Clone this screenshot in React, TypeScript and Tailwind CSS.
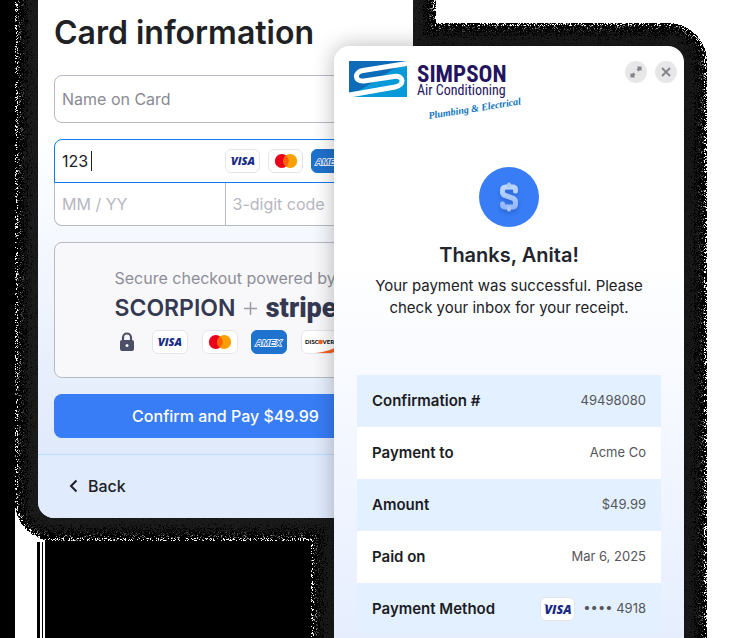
import { useMemo } from "react";
import type { ReactNode } from "react";

function boxDistance(x: number, y: number, l: number, t: number, r: number, b: number) {
  const radius = 16;
  const dx = Math.max(l + radius - x, x - (r - radius), 0);
  const dy = Math.max(t + radius - y, y - (b - radius), 0);
  return Math.hypot(dx, dy) - radius;
}

/* Grainy black halo that surrounds the two panels. */
function buildGrain() {
  const layers: Record<string, string[]> = {
    "#1b1b1b": [],
    "#111111": [],
    "#000000": [],
    "#444444": [],
    "#929292": [],
    "#ffffff": [],
  };
  let seed = 90210;
  const random = () => {
    seed = (seed * 1664525 + 1013904223) % 4294967296;
    return seed / 4294967296;
  };
  for (let y = 0; y < 638; y++) {
    let runColor = "";
    let runStart = 0;
    for (let x = 15; x <= 708; x++) {
      const d = Math.min(
        boxDistance(x + 0.5, y + 0.5, 38, -100, 413, 518),
        boxDistance(x + 0.5, y + 0.5, 334, 46, 684, 900),
      );
      let color = "";
      if (x < 708 && d > -2 && d < 23) {
        const n = random();
        if (d < 6) color = n < 0.15 ? "#111111" : "#1b1b1b";
        else if (d < 10) color = n < 0.25 ? "#111111" : n < 0.33 ? "#000000" : "#1b1b1b";
        else if (d < 14) color = n < 0.35 ? "#000000" : n < 0.6 ? "#111111" : "#1b1b1b";
        else if (d < 17) color = n < 0.65 ? "#000000" : n < 0.75 ? "#444444" : "#1b1b1b";
        else if (d < 20) color = n < 0.8 ? "#000000" : n < 0.93 ? "#444444" : "#929292";
        else color = n < 0.7 ? "#000000" : n < 0.77 ? "#929292" : "#ffffff";
      }
      if (color !== runColor) {
        if (runColor) {
          const w = x - runStart;
          layers[runColor].push(`M${runStart} ${y}h${w}v1h-${w}z`);
        }
        runColor = color;
        runStart = x;
      }
    }
  }
  return Object.entries(layers).map(([fill, parts]) => ({ fill, d: parts.join("") }));
}

function Backdrop() {
  const grain = useMemo(buildGrain, []);
  return (
    <svg
      aria-hidden="true"
      className="pointer-events-none absolute left-0 top-0"
      width="748"
      height="638"
      viewBox="0 0 748 638"
      shapeRendering="crispEdges"
    >
      <path d="M0 0h15v638H0zM37 542h3v96h-3zM42 542h1v96h-1zM45 540h270v98H45z" fill="#000" />
      {grain.map((layer) => (
        <path key={layer.fill} d={layer.d} fill={layer.fill} />
      ))}
    </svg>
  );
}

function Badge({ children, wide, blue }: { children: ReactNode; wide?: boolean; blue?: boolean }) {
  return (
    <span
      className={`flex h-6 shrink-0 items-center justify-center overflow-hidden rounded-md border ${
        wide ? "w-9" : "w-[35px]"
      } ${blue ? "border-[#1f72cd] bg-[#1f72cd]" : "border-[#e4e5ec] bg-white"}`}
    >
      {children}
    </span>
  );
}

function Visa({ large }: { large?: boolean }) {
  return (
    <svg width={large ? 32 : 28} height={large ? 18 : 16} viewBox="0 0 28 16" role="img" aria-label="Visa">
      <text
        x="14"
        y="12"
        textAnchor="middle"
        fill="#172b85"
        fontFamily="'Open Sans', 'Noto Sans', sans-serif"
        fontSize="11"
        fontWeight="800"
        fontStyle="italic"
      >
        VISA
      </text>
      <path d="M1 4h3l1 1.2z" fill="#172b85" />
    </svg>
  );
}

function Mastercard() {
  return (
    <svg width="24" height="16" viewBox="0 0 24 16" role="img" aria-label="Mastercard">
      <circle cx="7.8" cy="8" r="7" fill="#eb001b" />
      <circle cx="16.2" cy="8" r="7" fill="#f9a000" />
      <path d="M12 2.4a7 7 0 0 1 0 11.2a7 7 0 0 1 0-11.2z" fill="#ff5f00" />
    </svg>
  );
}

function Amex() {
  return (
    <svg width="32" height="16" viewBox="0 0 32 16" role="img" aria-label="Amex" className="shrink-0">
      <text
        x="15.5"
        y="11.5"
        textAnchor="middle"
        fill="#1f72cd"
        stroke="#fff"
        strokeWidth="1.5"
        paintOrder="stroke"
        fontFamily="'Liberation Sans', sans-serif"
        fontSize="9"
        fontWeight="700"
        fontStyle="italic"
      >
        AMEX
      </text>
    </svg>
  );
}

function Discover() {
  return (
    <svg width="34" height="22" viewBox="0 0 34 22" role="img" aria-label="Discover" className="shrink-0">
      <path d="M14 22Q28 20 34 16V22z" fill="#fd5f1e" />
      <text x="3" y="13" fill="#111" fontFamily="Lato, sans-serif" fontSize="6" fontWeight="900">
        DISC
      </text>
      <circle cx="18.5" cy="11" r="2.300" fill="#fd5f1e" />
      <text x="20.5" y="13" fill="#111" fontFamily="Lato, sans-serif" fontSize="6" fontWeight="900">
        VER
      </text>
    </svg>
  );
}

function SimpsonLogo() {
  return (
    <svg width="180" height="62" viewBox="0 0 180 62" role="img" aria-label="Simpson Air Conditioning" className="shrink-0">
      <defs>
        <clipPath id="logo-tile">
          <rect width="58" height="36" />
        </clipPath>
      </defs>
      <g clipPath="url(#logo-tile)">
        <rect width="58" height="36" fill="#0799d8" />
        <path d="M0 0H58L51 4L0 36z" fill="#0e6bb8" />
        <path
          d="M61 2L14 9.500C5 11 5 21 15 20L45 15.500C55 14 56 24 46 26L-2 34.500"
          fill="none"
          stroke="#fff"
          strokeWidth="5"
        />
      </g>
      <text
        x="68"
        y="21"
        fill="#24145f"
        fontFamily="'Roboto Condensed', 'Liberation Sans Narrow', Roboto, sans-serif"
        fontSize="23"
        fontWeight="700"
      >
        SIMPSON
      </text>
      <text
        x="68"
        y="34"
        fill="#24145f"
        fontFamily="'Roboto Condensed', 'Liberation Sans Narrow', Roboto, sans-serif"
        fontSize="14"
      >
        Air Conditioning
      </text>
      <text
        x="80"
        y="58"
        transform="rotate(-9 80 58)"
        fill="#0b74bd"
        fontFamily="'Liberation Serif', serif"
        fontSize="10"
        fontWeight="700"
        fontStyle="italic"
      >
        Plumbing &amp; Electrical
      </text>
    </svg>
  );
}

function SecureNotice() {
  return (
    <div className="mt-4 flex h-[136px] flex-col items-center justify-center rounded-lg border border-[#b8b9c4] bg-[#f8f8fb]">
      <div className="flex w-[222px] flex-col">
        <p className="whitespace-nowrap text-base leading-6 text-[#8d8e97]">Secure checkout powered by</p>
        <div className="flex h-9 items-center justify-between text-[#343951]">
          <span className="text-[23px] font-semibold leading-8">SCORPION</span>
          <svg width="13" height="13" viewBox="0 0 13 13" aria-hidden="true" className="shrink-0">
            <path d="M6.5 0V13M0 6.5H13" stroke="#9a9ba5" strokeWidth="1.5" />
          </svg>
          <span className="font-[Roboto,sans-serif] text-[27px] font-black leading-8">stripe</span>
        </div>
        <div className="mt-1 flex items-center justify-between">
          <svg width="24" height="20" viewBox="0 0 24 20" aria-hidden="true">
            <rect x="5" y="8" width="14" height="11" rx="2" fill="#4b4f68" />
            <path d="M8 9V5.5a4 4 0 0 1 8 0V9" fill="none" stroke="#4b4f68" strokeWidth="2.2" />
            <circle cx="12" cy="13.5" r="1.5" fill="#f8f8fb" />
          </svg>
          <Badge wide><Visa /></Badge>
          <Badge wide><Mastercard /></Badge>
          <Badge wide blue><Amex /></Badge>
          <Badge wide><Discover /></Badge>
        </div>
      </div>
    </div>
  );
}

function CheckoutPanel() {
  return (
    <form
      onSubmit={(event) => event.preventDefault()}
      className="relative min-w-0 flex-1 overflow-hidden rounded-b-2xl bg-linear-to-b from-white from-25% to-[#dfe9fb] to-90%"
    >
      <div className="px-4 pb-4 pt-3">
        <h1 className="text-[32px] font-semibold leading-[42px] text-[#202124]">Card information</h1>
        <input
          aria-label="Name on Card"
          placeholder="Name on Card"
          className="mt-[21px] block h-12 w-full rounded-lg border border-[#b8b9c4] bg-white px-[7px] text-base outline-none placeholder:text-[#898a93]"
        />
        <div className="mt-4">
          <div className="flex h-11 items-center gap-2 rounded-t-lg border border-[#0a7df5] bg-white px-[7px]">
            <div className="relative min-w-0 flex-1">
              <input
                aria-label="Card number"
                defaultValue="123"
                className="block h-8 w-full bg-transparent text-base text-[#202124] outline-none"
              />
              <span className="absolute left-[29px] top-[6px] h-5 w-px bg-[#202124]" />
            </div>
            <Badge><Visa /></Badge>
            <Badge><Mastercard /></Badge>
            <Badge blue><Amex /></Badge>
            <Badge><Discover /></Badge>
          </div>
          <div className="grid h-[43px] grid-cols-2 overflow-hidden rounded-b-lg border border-t-0 border-[#b8b9c4] bg-white">
            <input
              aria-label="Expiry date"
              placeholder="MM / YY"
              className="min-w-0 border-r border-[#b8b9c4] px-[7px] text-base outline-none placeholder:text-[#b6b7c2]"
            />
            <input
              aria-label="Security code"
              placeholder="3-digit code"
              className="min-w-0 px-[7px] text-base outline-none placeholder:text-[#b6b7c2]"
            />
          </div>
        </div>
        <SecureNotice />
        <button
          type="submit"
          className="mt-4 block h-11 w-full rounded-lg bg-[#387df6] text-base font-medium text-white"
        >
          Confirm and Pay $49.99
        </button>
      </div>
      <div className="h-16 border-t border-[#b9dcff] bg-[#e0ebfd] px-7 py-[15px]">
        <button type="button" className="flex h-8 items-center gap-2 text-base font-medium text-[#202124]">
          <svg width="14" height="16" viewBox="0 0 14 16" aria-hidden="true">
            <path d="M10.5 2.5L5 8L10.5 13.5" fill="none" stroke="#202124" strokeWidth="2" />
          </svg>
          Back
        </button>
      </div>
    </form>
  );
}

function Row({ label, children, tinted }: { label: string; children: ReactNode; tinted?: boolean }) {
  return (
    <tr className={`h-[52px] ${tinted ? "bg-[#e3f0ff]" : "bg-white"}`}>
      <th scope="row" className="whitespace-nowrap pl-[15px] text-left text-[15px] font-semibold text-[#1b1c1f]">
        {label}
      </th>
      <td className="whitespace-nowrap pr-[15px] text-right text-[13px] text-[#55565a]">{children}</td>
    </tr>
  );
}

function ReceiptPanel() {
  return (
    <section className="relative z-10 -ml-[79px] mt-[46px] min-h-[calc(100vh-46px)] w-[350px] shrink-0 rounded-t-2xl bg-linear-to-b from-white from-35% to-[#e5edfe] px-[23px] pb-6 pt-[15px] shadow-[0_0_22px_rgba(0,0,0,0.28)]">
      <header className="-ml-2 -mr-4 flex h-[62px] items-start justify-between">
        <SimpsonLogo />
        <div className="flex gap-2">
          <button type="button" aria-label="Expand" className="flex size-[22px] items-center justify-center rounded-full bg-[#e7e7e8]">
            <svg width="12" height="12" viewBox="0 0 12 12" aria-hidden="true">
              <path d="M7 0.500H11.500V5L10 4L8.500 5.500L6.500 3.500L8 2zM5 11.500H0.500V7L2 8L3.500 6.500L5.500 8.500L4 10z" fill="#83848b" />
            </svg>
          </button>
          <button type="button" aria-label="Close" className="flex size-[22px] items-center justify-center rounded-full bg-[#e7e7e8]">
            <svg width="10" height="10" viewBox="0 0 10 10" aria-hidden="true">
              <path d="M1 1L9 9M9 1L1 9" stroke="#83848b" strokeWidth="1.8" />
            </svg>
          </button>
        </div>
      </header>
      <div className="mt-11 flex flex-col items-center text-center">
        <svg width="60" height="60" viewBox="0 0 60 60" aria-hidden="true">
          <defs>
            <linearGradient id="coin" x1="0" y1="0" x2="0" y2="1">
              <stop offset="0" stopColor="#bdd6ff" />
              <stop offset="1" stopColor="#94b9fb" />
            </linearGradient>
            <filter id="drop" x="-50%" y="-50%" width="200%" height="200%">
              <feDropShadow dx="0" dy="3" stdDeviation="2" floodColor="#1d4fb5" floodOpacity="0.5" />
            </filter>
          </defs>
          <circle cx="30" cy="30" r="30" fill="#387df6" />
          <g filter="url(#drop)" fill="none" stroke="url(#coin)" strokeWidth="5" strokeLinecap="round" strokeLinejoin="round">
            <path d="M36.500 24V23Q36.500 20 33.500 20H27Q23.500 20 23.500 23.500V25Q23.500 28 27 28.800L33 30.800Q36.500 32 36.500 35V37Q36.500 40 33 40H27Q23.500 40 23.500 37.500V37" />
            <path d="M30 17.500V19M30 41V42.500" strokeWidth="4" stroke="#abc9fd" />
          </g>
        </svg>
        <h2 className="mt-[14px] text-xl font-semibold leading-7 text-[#22252e]">Thanks, Anita!</h2>
        <p className="mt-[6px] whitespace-nowrap text-[15px] leading-[22px] text-[#202124]">
          Your payment was successful. Please
          <br />
          check your inbox for your receipt.
        </p>
      </div>
      <table className="mt-14 w-full border-collapse">
        <tbody>
          <Row label="Confirmation #" tinted>49498080</Row>
          <Row label="Payment to">Acme Co</Row>
          <Row label="Amount" tinted>$49.99</Row>
          <Row label="Paid on">Mar 6, 2025</Row>
          <Row label="Payment Method" tinted>
            <span className="flex items-center justify-end gap-2">
              <Badge><Visa large /></Badge>
              <span>•••• 4918</span>
            </span>
          </Row>
        </tbody>
      </table>
    </section>
  );
}

export default function App() {
  return (
    <main className="relative h-screen w-full max-w-[748px] overflow-hidden bg-white font-[Inter,sans-serif]">
      <Backdrop />
      <div className="flex items-start pl-[38px] pr-16">
        <CheckoutPanel />
        <ReceiptPanel />
      </div>
    </main>
  );
}
